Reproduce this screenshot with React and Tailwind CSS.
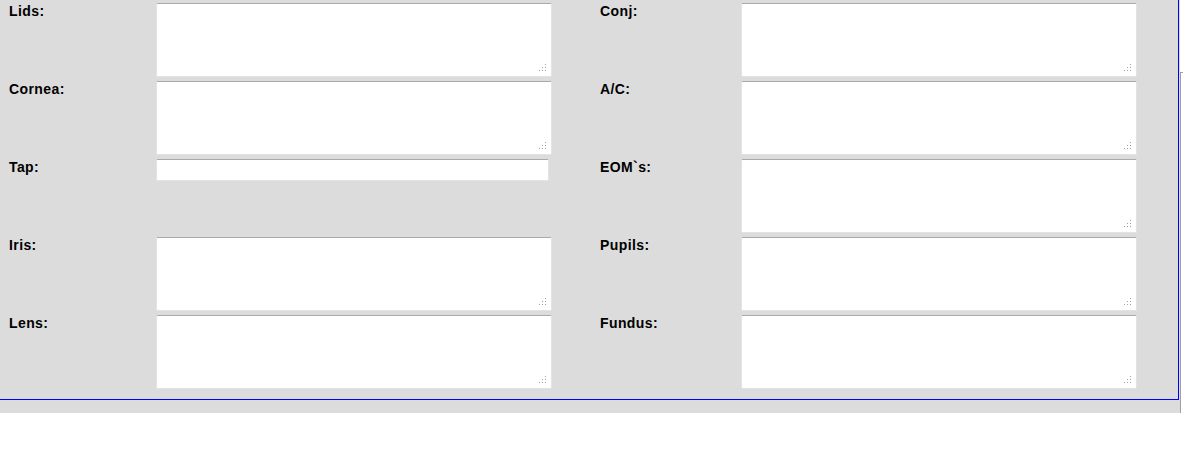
import React from 'react';

const rows = [
  { left: 'Lids:', right: 'Conj:' },
  { left: 'Cornea:', right: 'A/C:' },
  { left: 'Tap:', right: 'EOM`s:', leftInput: true },
  { left: 'Iris:', right: 'Pupils:' },
  { left: 'Lens:', right: 'Fundus:' },
];

// firefox-style dotted resize grip
const Grip = () => (
  <svg className="absolute right-[5px] bottom-[5px]" width="8" height="8" viewBox="0 0 8 8">
    <rect x="6" y="0" width="1" height="1" fill="#a0a0a0" />
    <rect x="3" y="3" width="1" height="1" fill="#a0a0a0" />
    <rect x="6" y="3" width="1" height="1" fill="#a0a0a0" />
    <rect x="0" y="6" width="1" height="1" fill="#a0a0a0" />
    <rect x="3" y="6" width="1" height="1" fill="#a0a0a0" />
    <rect x="6" y="6" width="1" height="1" fill="#a0a0a0" />
  </svg>
);

const Area = () => (
  <div className="relative w-[396px] h-[74px]">
    <textarea className="block w-full h-full resize-none bg-white rounded-[2px] border border-[#e2e2e8] border-t-[#a9a9a9] outline-none" />
    <Grip />
  </div>
);

const Field = () => (
  <input
    type="text"
    className="block w-[393px] h-[22px] bg-white rounded-[2px] border border-[#e2e2e8] border-t-[#a9a9a9] outline-none"
  />
);

const Label = ({ children, className }) => (
  <div className={`text-[14px] leading-[16px] font-bold text-black tracking-[0.4px] ${className}`}>
    {children}
  </div>
);

export default function App() {
  return (
    <div className="flex w-[1183px] bg-white" style={{ fontFamily: '"Liberation Sans", Arial, sans-serif' }}>
      <div className="w-[1180px] h-[413px] bg-[#dcdcdc]">
        <div className="w-[1179px] h-[400px] border-r border-b border-[#0000ff] pt-[3px] flex flex-col gap-[4px]">
          {rows.map((r) => (
            <div key={r.left} className="flex h-[74px]">
              <Label className="w-[156px] pl-[9px]">{r.left}</Label>
              {r.leftInput ? <div className="w-[396px]"><Field /></div> : <Area />}
              <Label className="w-[189px] pl-[48px]">{r.right}</Label>
              <Area />
            </div>
          ))}
        </div>
      </div>
      <div className="flex-1 mt-[72px] h-[341px] border-l border-t border-[#a0a0a0]" />
    </div>
  );
}
